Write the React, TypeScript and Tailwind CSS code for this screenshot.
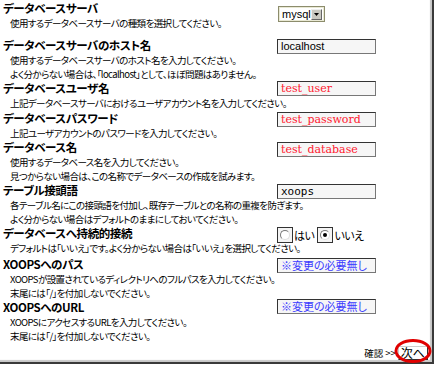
import React from 'react';

const jp = { fontFamily: '"Noto Sans CJK JP", "Noto Sans", sans-serif', fontFeatureSettings: '"palt"' };

interface FieldRowProps {
  title: string;
  lines: string[];
  children?: React.ReactNode;
  extra?: string;
}

const FieldRow: React.FC<FieldRowProps> = ({ title, lines, children, extra = '' }) => (
  <div className={`flex ${extra}`}>
    <div className="w-[277px] shrink-0 pl-[3px]">
      <div className="text-[11.5px] leading-[15px] font-bold tracking-[-0.4px] text-black">{title}</div>
      {lines.map((l, i) => (
        <div key={i} className="pl-[7px] text-[9.5px] leading-[14px] tracking-[-0.6px] text-black whitespace-nowrap">
          {l}
        </div>
      ))}
    </div>
    <div className="pt-[1px]">{children}</div>
  </div>
);

const TextBox: React.FC<{ value: string; className?: string; font?: string }> = ({ value, className = '', font }) => (
  <div
    className={`w-[99px] h-[15px] border border-t-[#333] border-l-[#333] border-b-[#777] border-r-[#777] bg-[#f6f6f6] px-[3px] text-[11px] leading-[13px] whitespace-nowrap overflow-hidden ${className}`}
    style={{ fontFamily: font }}
  >
    {value}
  </div>
);

const RadioBox: React.FC<{ checked?: boolean }> = ({ checked }) => (
  <div className="w-[16px] h-[16px] border border-[#333] bg-[#f4f4f4] flex items-center justify-center">
    <div className="w-[10px] h-[10px] rounded-full border border-t-[#777] border-l-[#777] border-b-[#ddd] border-r-[#ddd] bg-white flex items-center justify-center">
      {checked && <div className="w-[4px] h-[4px] rounded-full bg-black" />}
    </div>
  </div>
);

export default function App() {
  return (
    <div className="w-[440px] h-[372px] bg-white relative overflow-hidden" style={jp}>
      <div className="w-[434px] h-[364px] border-r-[2px] border-b-[2px] border-[#3a3a3a] shadow-[inset_-2px_-2px_1px_#c8c8c8] pt-[1px] relative">
        <FieldRow title="データベースサーバ" lines={['使用するデータベースサーバの種類を選択してください。']} extra="h-[37px]">
          <div className="mt-[4px] ml-[1px] flex items-center h-[16px] w-[47px] border border-[#8c8c6c] bg-[#e9e9d4] p-[1px]">
            <div className="flex items-center h-full w-full bg-white">
              <span className="flex-1 pl-[2px] text-[11px] leading-[12px] text-black" style={{ fontFamily: '"Liberation Sans", sans-serif' }}>mysql</span>
              <div className="w-[11px] h-[11px] mr-[1px] bg-[#c8c8c0] border border-t-[#eee] border-l-[#eee] border-b-[#666] border-r-[#666] flex items-center justify-center">
                <svg width="5" height="3" viewBox="0 0 5 3"><path d="M0 0h5L2.5 3z" fill="#000" /></svg>
              </div>
            </div>
          </div>
        </FieldRow>
        <FieldRow
          title="データベースサーバのホスト名"
          lines={['使用するデータベースサーバのホスト名を入力してください。', 'よく分からない場合は、「localhost」として、ほぼ問題はありません。']}
          extra="h-[43px]"
        >
          <TextBox value="localhost" className="text-black" font='"Liberation Sans", sans-serif' />
        </FieldRow>
        <FieldRow title="データベースユーザ名" lines={['上記データベースサーバにおけるユーザアカウント名を入力してください。']} extra="h-[30px]">
          <TextBox value="test_user" className="text-[#ff2030] -mt-[1px]" font='"DejaVu Serif", serif' />
        </FieldRow>
        <FieldRow title="データベースパスワード" lines={['上記ユーザアカウントのパスワードを入力してください。']} extra="h-[29px]">
          <TextBox value="test_password" className="text-[#ff2030]" font='"DejaVu Serif", serif' />
        </FieldRow>
        <FieldRow
          title="データベース名"
          lines={['使用するデータベース名を入力してください。', '見つからない場合は、この名称でデータベースの作成を試みます。']}
          extra="h-[43px]"
        >
          <TextBox value="test_database" className="text-[#ff2030] mt-[1px]" font='"DejaVu Serif", serif' />
        </FieldRow>
        <FieldRow
          title="テーブル接頭語"
          lines={['各テーブル名にこの接頭語を付加し、既存テーブルとの名称の重複を防ぎます。', 'よく分からない場合はデフォルトのままにしておいてください。']}
          extra="h-[43px]"
        >
          <TextBox value="xoops" className="text-black" font='"DejaVu Sans Mono", monospace' />
        </FieldRow>
        <FieldRow
          title="データベースへ持続的接続"
          lines={['デフォルトは「いいえ」です。よく分からない場合は「いいえ」を選択してください。']}
          extra="h-[31px]"
        >
          <div className="flex items-center text-[11px] leading-[16px] tracking-[-0.5px] text-black">
            <RadioBox />
            <span className="ml-[1px] mr-[3px]">はい</span>
            <RadioBox checked />
            <span className="ml-[1px]">いいえ</span>
          </div>
        </FieldRow>
        <FieldRow
          title="XOOPSへのパス"
          lines={['XOOPSが設置されているディレクトリへのフルパスを入力してください。', '末尾には「/」を付加しないでください。']}
          extra="h-[43px]"
        >
          <TextBox value="※変更の必要無し" className="text-[#3a3aff]" />
        </FieldRow>
        <FieldRow
          title="XOOPSへのURL"
          lines={['XOOPSにアクセスするURLを入力してください。', '末尾には「/」を付加しないでください。']}
          extra="h-[44px]"
        >
          <TextBox value="※変更の必要無し" className="text-[#3a3aff] -mt-[2px]" />
        </FieldRow>
        <div className="flex justify-end items-center pr-[4px] mt-[2px]">
          <span className="text-[9.5px] leading-[14px] text-black mr-[2px]">確認 &gt;&gt;</span>
          <div className="h-[14px] px-[2px] border border-t-[#ccc] border-l-[#ccc] border-b-[#333] border-r-[#333] bg-white text-[12px] leading-[12px] text-black">次へ</div>
        </div>
        <svg className="absolute left-[394px] top-[338px]" width="38" height="26" viewBox="0 0 38 26">
          <ellipse cx="19" cy="13" rx="17" ry="10.5" fill="none" stroke="#e00000" strokeWidth="3" />
        </svg>
      </div>
    </div>
  );
}
